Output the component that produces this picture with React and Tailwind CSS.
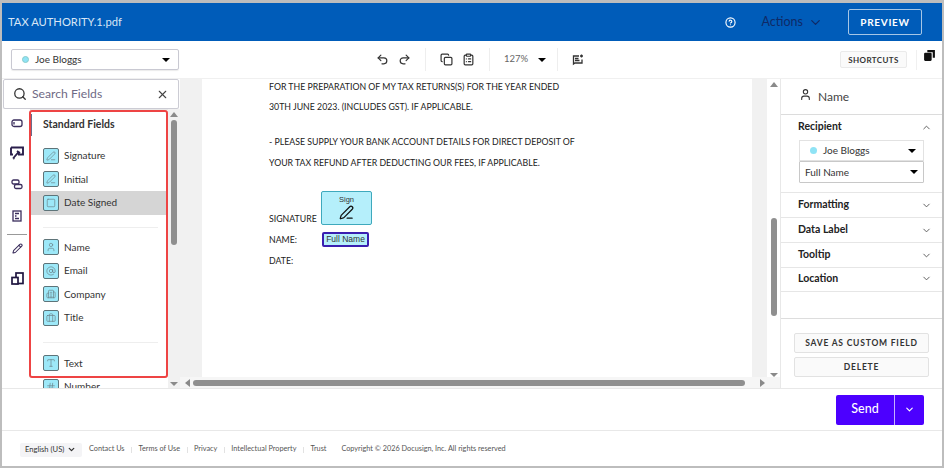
import React from "react";
import { Undo2, Redo2, Copy, ClipboardList, Search, X, ChevronDown, ChevronUp, User, PenLine, AtSign, Building2, Briefcase, Type, Hash, Square, CircleHelp, Pencil } from "lucide-react";

const Tri = ({ c = "border-t-black" }) => <span className={`inline-block w-0 h-0 border-x-[4px] border-x-transparent border-t-[4px] ${c}`} />;

function FieldRow({ icon: I, label, active }) {
  return (
    <div className={`h-[23.5px] flex items-center pl-[13px] shrink-0 ${active ? "bg-[#d5d5d5]" : ""}`}>
      <span className="w-[16px] h-[16px] rounded-[2px] bg-[#9de8f8] border border-[#5e7479] flex items-center justify-center text-[#6a8087]">
        <I size={10} strokeWidth={1.6} />
      </span>
      <span className="ml-[5px] text-[10px] text-[#333]">{label}</span>
    </div>
  );
}

const Sep = () => <div className="h-px bg-[#eeeeee] ml-[13px] mr-[10px] mt-[12px] mb-[8px] shrink-0" />;

function Accordion({ label, h }) {
  return (
    <div className={`flex items-center justify-between pl-[17px] pr-[10px] border-b border-[#e6e6e6] ${h}`}>
      <span className="text-[10.5px] font-bold text-[#222]">{label}</span>
      <ChevronDown size={11} className="text-[#555]" />
    </div>
  );
}

export default function App() {
  return (
    <div className="w-[944px] h-[468px] bg-[#bdbdbd] pt-[3px] pl-[2px] pr-[2px] pb-[2px] overflow-hidden" style={{ fontFamily: '"Lato", "Noto Sans", sans-serif' }}>
      <div className="w-full h-full bg-white flex flex-col relative">
        <header className="h-[38px] shrink-0 bg-[#005cb9] flex items-center pl-[6px] pr-[20px] text-white">
          <span className="text-[11.2px] text-[#d8e6f6]">TAX AUTHORITY.1.pdf</span>
          <div className="flex-1" />
          <CircleHelp size={11} strokeWidth={2.5} className="mr-[26px]" />
          <span className="text-[12.5px] text-[#0f2a66] mr-[5px]">Actions</span>
          <ChevronDown size={15} className="text-[#0f2a66] mr-[25px]" />
          <span className="w-[74px] h-[26px] border border-[#a6c6e6] rounded-[2px] flex items-center justify-center text-[10px] font-bold tracking-[0.7px]">PREVIEW</span>
        </header>

        <div className="h-[37px] shrink-0 flex items-center relative">
          <div className="ml-[9px] w-[168px] h-[21px] border border-[#c9c9d2] rounded-[2px] flex items-center pl-[10px] pr-[8px] shadow-[0_1px_1px_rgba(0,0,0,0.08)]">
            <span className="w-[7px] h-[7px] rounded-full bg-[#8fe3f5] border border-[#8cc] mr-[6px]" />
            <span className="text-[10px] text-[#333] flex-1">Joe Bloggs</span>
            <Tri />
          </div>
          <div className="ml-[197px] flex items-center text-[#333]">
            <Undo2 size={13} strokeWidth={2.2} />
            <Redo2 size={13} strokeWidth={2.2} className="ml-[9px]" />
            <div className="w-px h-[23px] bg-[#eee] mx-[14px]" />
            <Copy size={13} strokeWidth={2.2} />
            <ClipboardList size={13} strokeWidth={2.2} className="ml-[9px]" />
            <div className="w-px h-[23px] bg-[#eee] mx-[14px]" />
            <span className="text-[9.5px] text-[#666]">127%</span>
            <span className="ml-[10px] flex"><Tri /></span>
            <div className="w-px h-[23px] bg-[#eee] ml-[11px] mr-[14px]" />
            <svg width="12" height="12" viewBox="0 0 12 12" fill="none" stroke="#333" strokeWidth="1.3"><path d="M7 2H1.5v8l1.5-1H10V5.5M3 4.5h3.5M3 6.5h4.5M9.5 0.5v3M8 2h3" /></svg>
          </div>
          <div className="flex-1" />
          <span className="w-[67px] h-[17px] border border-[#eaeaea] bg-[#fafafa] rounded-[2px] flex items-center justify-center text-[8px] font-bold tracking-[0.4px] text-[#333] mr-[9px]">SHORTCUTS</span>
          <div className="w-px h-[20px] bg-[#f0f0f0] mr-[6px]" />
          <svg width="13" height="13" viewBox="0 0 12 12" className="mr-[6px] mb-[8px]"><path d="M4 1h7v7H9V3H4z" fill="#111" /><rect x="1" y="3.5" width="7" height="7.5" rx="1" fill="#111" /></svg>
        </div>

        <main className="h-[310px] shrink-0 flex border-t border-[#f0f0f0] overflow-hidden">
          <div className="w-[178px] shrink-0 flex flex-col">
            <div className="mx-[1px] h-[30px] border border-[#ccccd4] rounded-[2px] flex items-center pl-[9px] pr-[9px] shadow-[0_1px_1px_rgba(0,0,0,0.1)] shrink-0">
              <Search size={14} strokeWidth={2.2} className="text-[#333]" />
              <span className="ml-[5px] text-[12.2px] text-[#6f6a85] flex-1">Search Fields</span>
              <X size={13} className="text-[#444]" />
            </div>
            <div className="flex flex-1 min-h-0">
              <div className="w-[28px] shrink-0 bg-white flex flex-col items-center text-[#3a2d5c] pt-[10px] pl-[2px]">
                <svg width="12" height="9" viewBox="0 0 12 9" fill="none" stroke="#3a2d5c" strokeWidth="1.3"><rect x="1" y="1" width="10" height="6.5" rx="2" /><path d="M3 3v2.5" /></svg>
                <svg className="mt-[18px]" width="14" height="14" viewBox="0 0 14 14" fill="none" stroke="#2a1f4c" strokeWidth="1.9"><path d="M1 1.5h12v7H8M1 1.5v7h2M3 12.5 9 5.5M7 5l3 2M3 12.5l1.5-.5" /></svg>
                <svg className="mt-[19px]" width="12" height="11" viewBox="0 0 12 11" fill="none" stroke="#3a2d5c" strokeWidth="1.3"><rect x="1" y="1" width="7" height="4" rx="1.5" /><rect x="3.5" y="5.5" width="7.5" height="4" rx="1.5" /></svg>
                <svg className="mt-[20px]" width="10" height="12" viewBox="0 0 10 12" fill="none" stroke="#3a2d5c" strokeWidth="1.3"><rect x="1" y="1" width="8" height="10" /><path d="M3 3.5h4M3 6h1.5M3 8.5h4" /></svg>
                <div className="w-[20px] h-px bg-[#999] mt-[12px]" />
                <Pencil size={11} className="mt-[8px]" strokeWidth={2.2} />
                <svg className="mt-[18px]" width="13" height="13" viewBox="0 0 13 13" fill="none" stroke="#1f1640" strokeWidth="1.7"><rect x="5" y="1" width="7" height="10.5" /><rect x="1" y="5.5" width="6" height="6.5" fill="#fff" /></svg>
              </div>
              <div className="w-[138px] shrink-0 flex flex-col overflow-hidden relative">
                <div className="absolute left-0 top-[5px] w-[2px] h-[22px] bg-[#6b6b8a]" />
                <div className="h-[32px] pl-[13px] flex items-center text-[10.5px] font-bold text-[#333] shrink-0">Standard Fields</div>
                <div className="h-[3px] shrink-0" />
                <FieldRow icon={PenLine} label="Signature" />
                <FieldRow icon={PenLine} label="Initial" />
                <FieldRow icon={Square} label="Date Signed" active />
                <Sep />
                <FieldRow icon={User} label="Name" />
                <FieldRow icon={AtSign} label="Email" />
                <FieldRow icon={Building2} label="Company" />
                <FieldRow icon={Briefcase} label="Title" />
                <Sep />
                <div className="h-px shrink-0" />
                <FieldRow icon={Type} label="Text" />
                <FieldRow icon={Hash} label="Number" />
              </div>
              <div className="w-[12px] shrink-0 bg-[#f1f1f1] flex flex-col items-center pt-[3px] pb-[2px]">
                <span className="w-0 h-0 border-x-[4px] border-x-transparent border-b-[5px] border-b-[#8a8a8a]" />
                <div className="w-[6px] h-[125px] rounded-[3px] bg-[#8f8f8f] mt-[3px]" />
                <div className="flex-1" />
                <Tri c="border-t-[#8a8a8a]" />
              </div>
            </div>
          </div>

          <div className="w-[600px] shrink-0 flex flex-col">
            <div className="flex flex-1 min-h-0">
              <div className="flex-1 bg-[#f1f1f1] pl-[22px] pr-[15px] min-w-0">
                <div className="h-full bg-white pl-[67px] pt-[1px] text-[8.75px] text-[#222] relative">
                  <div className="h-[14px] leading-[14px]">FOR THE PREPARATION OF MY TAX RETURNS(S) FOR THE YEAR ENDED</div>
                  <div className="h-[14px] leading-[14px] mt-[6px]">30TH JUNE 2023. (INCLUDES GST). IF APPLICABLE.</div>
                  <div className="h-[14px] leading-[14px] mt-[21px]">- PLEASE SUPPLY YOUR BANK ACCOUNT DETAILS FOR DIRECT DEPOSIT OF</div>
                  <div className="h-[14px] leading-[14px] mt-[7px]">YOUR TAX REFUND AFTER DEDUCTING OUR FEES, IF APPLICABLE.</div>
                  <div className="h-[14px] leading-[14px] mt-[42px]">SIGNATURE</div>
                  <div className="h-[14px] leading-[14px] mt-[7px]">NAME:</div>
                  <div className="h-[14px] leading-[14px] mt-[7px]">DATE:</div>
                  <div className="absolute left-[119px] top-[112px] w-[51px] h-[34px] bg-[#b5effb] border border-[#3ea9bd] rounded-[2px] flex flex-col items-center pt-[3px]">
                    <span className="text-[7.5px] leading-[10px] text-[#333]" style={{ fontFamily: '"Liberation Sans", sans-serif' }}>Sign</span>
                    <PenLine size={15} className="text-[#111]" />
                  </div>
                  <div className="absolute left-[120px] top-[153px] w-[47px] h-[15px] bg-[#b5effb] border-2 border-[#3a1fb0] rounded-[2px] flex items-center justify-center text-[8.5px] text-[#333]" style={{ fontFamily: '"Liberation Sans", sans-serif' }}>Full Name</div>
                </div>
              </div>
              <div className="w-[13px] shrink-0 bg-white flex flex-col items-center pt-[3px]">
                <span className="w-0 h-0 border-x-[4px] border-x-transparent border-b-[5px] border-b-[#8a8a8a]" />
                <div className="w-[6px] h-[98px] rounded-[3px] bg-[#8f8f8f] mt-[131px]" />
                <div className="flex-1" />
                <Tri c="border-t-[#8a8a8a]" />
              </div>
            </div>
            <div className="h-[11px] shrink-0 bg-[#f6f6f6] flex items-center pl-[5px] pr-[15px]">
              <span className="w-0 h-0 border-y-[4px] border-y-transparent border-r-[5px] border-r-[#8a8a8a]" />
              <div className="w-[552px] h-[6px] rounded-[3px] bg-[#8f8f8f] ml-[3px]" />
              <div className="flex-1" />
              <span className="w-0 h-0 border-y-[4px] border-y-transparent border-l-[5px] border-l-[#8a8a8a]" />
            </div>
          </div>

          <aside className="flex-1 border-l border-[#e8e8e8] flex flex-col min-w-0">
            <div className="h-[36px] shrink-0 border-b border-[#dcdcdc] flex items-center pl-[18px]">
              <User size={13} className="text-[#333] mb-[4px]" />
              <span className="ml-[6px] text-[12px] text-[#444]">Name</span>
            </div>
            <div className="h-[78px] shrink-0 border-b border-[#e6e6e6] pl-[17px] pr-[10px] pt-[5px]">
              <div className="flex items-center justify-between h-[14px]">
                <span className="text-[10.5px] font-bold text-[#222]">Recipient</span>
                <ChevronUp size={11} className="text-[#555]" />
              </div>
              <div className="mt-[6px] ml-[1px] w-[125px] h-[21px] border border-[#e2e2e2] flex items-center pl-[10px] pr-[7px]">
                <span className="w-[7px] h-[7px] rounded-full bg-[#8fe3f5] mr-[6px]" />
                <span className="text-[10px] text-[#333] flex-1">Joe Bloggs</span>
                <Tri />
              </div>
              <div className="ml-[1px] w-[125px] h-[22px] border border-[#c8c8c8] rounded-[1px] flex items-center pl-[5px] pr-[5px]">
                <span className="text-[10px] text-[#333] flex-1">Full Name</span>
                <Tri />
              </div>
            </div>
            <Accordion label="Formatting" h="h-[25px]" />
            <Accordion label="Data Label" h="h-[25px]" />
            <Accordion label="Tooltip" h="h-[25px]" />
            <Accordion label="Location" h="h-[24px] pb-[2px]" />
            <div className="flex-1 border-b border-[#dddddd]" />
            <div className="h-[69px] shrink-0 pl-[13px] pt-[14px]">
              <div className="w-[135px] h-[20px] border border-[#e2e2e2] bg-[#fafafa] rounded-[2px] flex items-center justify-center text-[8.5px] font-bold tracking-[0.8px] text-[#333]">SAVE AS CUSTOM FIELD</div>
              <div className="mt-[4px] w-[135px] h-[20px] border border-[#e2e2e2] bg-[#fafafa] rounded-[2px] flex items-center justify-center text-[8.5px] font-bold tracking-[0.8px] text-[#333]">DELETE</div>
            </div>
          </aside>
        </main>

        <div className="h-[43px] shrink-0 border-t border-b border-[#e8e8e8] flex items-center justify-end pr-[18px]">
          <div className="h-[30px] w-[88px] flex rounded-[2px] bg-[#4c00ff] text-white">
            <span className="w-[59px] flex items-center justify-center text-[12.5px] font-medium border-r border-[#c6b0ff]">Send</span>
            <span className="flex-1 flex items-center justify-center"><ChevronDown size={11} strokeWidth={2.5} /></span>
          </div>
        </div>

        <footer className="flex-1 flex items-center pl-[18px] text-[7.3px] text-[#555] pt-[2px]">
          <span className="w-[62px] h-[14px] rounded-[2px] bg-[#f4f4f6] flex items-center pl-[5px] text-[#333] text-[7.6px]">English (US)<ChevronDown size={9} strokeWidth={3.5} className="ml-[3px]" /></span>
          <span className="ml-[7px]">Contact Us</span>
          <span className="w-px h-[6px] bg-[#e2e2e2] mx-[6.5px]" />
          <span>Terms of Use</span>
          <span className="w-px h-[6px] bg-[#e2e2e2] mx-[6.5px]" />
          <span>Privacy</span>
          <span className="w-px h-[6px] bg-[#e2e2e2] mx-[6.5px]" />
          <span>Intellectual Property</span>
          <span className="w-px h-[6px] bg-[#e2e2e2] mx-[6.5px]" />
          <span>Trust</span>
          <span className="ml-[15px]">Copyright © 2026 Docusign, Inc. All rights reserved</span>
        </footer>

        <div className="absolute left-[27px] top-[107px] w-[139px] h-[268px] border-2 border-[#ee4444] rounded-[3px] pointer-events-none" />
      </div>
    </div>
  );
}
